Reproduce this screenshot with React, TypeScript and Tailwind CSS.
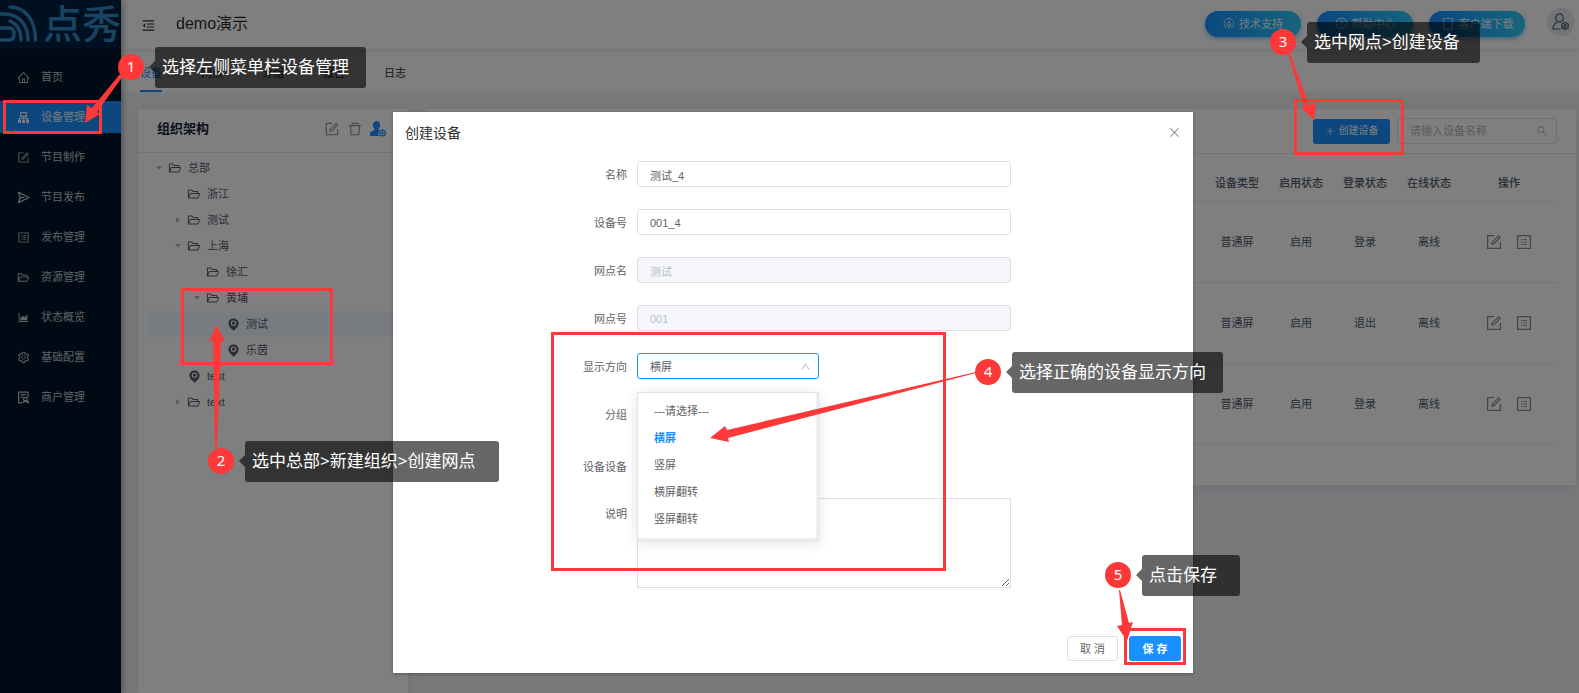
import type { ReactNode } from 'react';
import {
  AiOutlineAreaChart,
  AiOutlineClose,
  AiOutlineDelete,
  AiOutlineFolderOpen,
  AiOutlineForm,
  AiOutlineHome,
  AiOutlineMenuFold,
  AiOutlinePlus,
  AiOutlineProfile,
  AiOutlineQuestionCircle,
  AiOutlineSearch,
  AiOutlineSetting,
  AiOutlineTablet,
  AiOutlineUp,
} from 'react-icons/ai';

const DeviceIcon = () => (
  <svg viewBox="0 0 13 13" className="size-[13px]" fill="none" stroke="currentColor" strokeWidth="1.2">
    <path d="M3.600 1.600h5.800v3.800H3.600zM6.500 5.400v3M2.500 9V7.300h8V9" />
    <path d="M1 8.800h3V12H1zM5 8.800h3V12H5zM9 8.800h3V12H9z" fill="currentColor" stroke="none" />
  </svg>
);

const SendIcon = () => (
  <svg viewBox="0 0 14 14" className="size-[13px]" fill="none" stroke="currentColor" strokeWidth="1.4" strokeLinejoin="round">
    <path d="M1.5 1.5 13 7 1.5 12.5 3.5 7z" />
    <path d="M3.5 7H8" />
  </svg>
);

const MerchantIcon = () => (
  <svg viewBox="0 0 14 14" className="size-[13px]" fill="none" stroke="currentColor" strokeWidth="1.3">
    <path d="M5.5 12.8H1.8V1.2h10v6M4 4h5.6M4 6.6h3" />
    <circle cx="9" cy="8.8" r="1.9" />
    <path d="M6 13c.5-1.6 1.600-2.200 3-2.200l3.500 2.400M10.500 10l2.300 2.600" />
  </svg>
);

const UserPlusIcon = () => (
  <svg viewBox="0 0 16 16" className="size-4" fill="currentColor">
    <path d="M6.500 0C8.700 0 10.200 1.700 10.200 4c0 1.600-.7 3-1.600 3.800v1.300l1 .5A4 4 0 0 0 9.300 15H1C.4 15 0 14.600 0 14v-1.400C0 10.800 2.600 10 4.500 9.100V7.800C3.500 7 2.800 5.600 2.800 4 2.800 1.700 4.300 0 6.500 0z" />
    <circle cx="12.500" cy="12" r="2.900" fill="none" stroke="currentColor" strokeWidth="1.200" />
    <path d="M12 10.300h1v1.200h1.200v1H13v1.200h-1v-1.200h-1.200v-1H12z" />
  </svg>
);

const UserSettingIcon = () => (
  <svg viewBox="0 0 18 18" className="size-[18px]" fill="none" stroke="currentColor" strokeWidth="1.200">
    <ellipse cx="7.500" cy="5" rx="3.700" ry="4.200" />
    <path d="M5.200 9.200C2.500 10.200 1 12.300 1 16h7.500" />
    <path d="m13 9.300 3.200 1.800v3.700L13 16.600l-3.200-1.800v-3.700z" />
    <circle cx="13" cy="13" r="1.300" />
  </svg>
);

const SupportIcon = () => (
  <svg viewBox="0 0 12 13" className="size-3" fill="none" stroke="currentColor" strokeWidth="1">
    <path d="M3.500 11C.4 9 0 5 2 2.600 4-.1 8-.1 10 2.600c2 2.400 1.600 6.400-1.500 8.400" />
    <path d="M6 12V6.500M6 3.200 4 6.800v2.400M6 3.200l2 3.600v2.400" />
  </svg>
);

const PinIcon = () => (
  <svg viewBox="0 0 12 14" className="h-[13px] w-[11px]">
    <path d="M6 .5c3.100 0 5.500 2.300 5.500 5.300C11.500 9 8 12 6 13.700 4 12 .5 9 .5 5.800.5 2.800 2.900.5 6 .5z" fill="#515a6e" />
    <circle cx="6" cy="5.500" r="2.400" fill="none" stroke="#fff" strokeWidth="1.100" />
  </svg>
);

const MENU: { label: string; icon: ReactNode; active?: boolean }[] = [
  { label: '首页', icon: <AiOutlineHome /> },
  { label: '设备管理', icon: <DeviceIcon />, active: true },
  { label: '节目制作', icon: <AiOutlineForm /> },
  { label: '节目发布', icon: <SendIcon /> },
  { label: '发布管理', icon: <AiOutlineProfile /> },
  { label: '资源管理', icon: <AiOutlineFolderOpen /> },
  { label: '状态概览', icon: <AiOutlineAreaChart /> },
  { label: '基础配置', icon: <AiOutlineSetting /> },
  { label: '商户管理', icon: <MerchantIcon /> },
];

const TABS = ['设备', '网点', '分组', '报告', '日志'];

type Node = {
  label: string;
  level: number;
  kind: 'folder' | 'pin';
  caret?: 'open' | 'closed';
  selected?: boolean;
};

const TREE: Node[] = [
  { label: '总部', level: 0, kind: 'folder', caret: 'open' },
  { label: '浙江', level: 1, kind: 'folder' },
  { label: '测试', level: 1, kind: 'folder', caret: 'closed' },
  { label: '上海', level: 1, kind: 'folder', caret: 'open' },
  { label: '徐汇', level: 2, kind: 'folder' },
  { label: '黄埔', level: 2, kind: 'folder', caret: 'open' },
  { label: '测试', level: 3, kind: 'pin', selected: true },
  { label: '乐茵', level: 3, kind: 'pin' },
  { label: 'test', level: 1, kind: 'pin' },
  { label: 'text', level: 1, kind: 'folder', caret: 'closed' },
];

const INDENT = ['pl-1', 'pl-[23px]', 'pl-[42px]', 'pl-[62px]'];

const DEVICES = [
  { id: 1, type: '普通屏', enabled: '启用', login: '登录', online: '离线' },
  { id: 2, type: '普通屏', enabled: '启用', login: '退出', online: '离线' },
  { id: 3, type: '普通屏', enabled: '启用', login: '登录', online: '离线' },
];

const FIELDS = [
  { id: 'name', label: '名称', value: '测试_4' },
  { id: 'device-no', label: '设备号', value: '001_4' },
  { id: 'site-name', label: '网点名', value: '测试', disabled: true },
  { id: 'site-no', label: '网点号', value: '001', disabled: true },
];

const DIRECTIONS = ['---请选择---', '横屏', '竖屏', '横屏翻转', '竖屏翻转'];

// Tutorial overlay: numbered badges, callouts, highlight frames and arrows
const STEPS = [
  { text: '选择左侧菜单栏设备管理', badge: 'left-[118px] top-[54px]', tip: 'left-[155px] top-[47px] w-[211px]' },
  { text: '选中总部>新建组织>创建网点', badge: 'left-[208px] top-[448px]', tip: 'left-[245px] top-[441px] w-[254px]' },
  { text: '选中网点>创建设备', badge: 'left-[1270px] top-[29px]', tip: 'left-[1307px] top-[22px] w-[173px]' },
  { text: '选择正确的设备显示方向', badge: 'left-[975px] top-[359px]', tip: 'left-[1012px] top-[352px] w-[211px]' },
  { text: '点击保存', badge: 'left-[1105px] top-[562px]', tip: 'left-[1142px] top-[555px] w-[98px]' },
];

const FRAMES = [
  'left-[3px] top-[100px] w-[99px] h-[34px]',
  'left-[181px] top-[288px] w-[152px] h-[77px]',
  'left-[1294px] top-[99px] w-[110px] h-[56px]',
  'left-[551px] top-[332px] w-[395px] h-[239px]',
  'left-[1124px] top-[628px] w-[62px] h-[37px]',
];

const ARROWS = [
  '120,74 92,108 87,105 85,123 100,114 97,112 123,76',
  '215,448 213,341 209,341 217,325 225,342 221,341 217,448',
  '1288,53 1304,107 1301,108 1314,120 1316,103 1309,105 1290,53',
  '976,372 727,430 725,426 710,438 729,442 728,438 976,373',
  '1119,590 1122,625 1117,626 1127,641 1133,622 1129,623 1120,590',
];

function Sidebar() {
  return (
    <aside className="relative z-10 w-[121px] shrink-0 bg-[#001529] shadow-[2px_0_6px_rgba(0,21,41,0.35)]">
      <div className="flex h-[49px] items-center overflow-hidden bg-[#002140] text-[#3ea2e4]">
        <svg viewBox="0 0 43 49" className="h-[49px] w-[43px] shrink-0 opacity-80" fill="none" stroke="currentColor" strokeWidth="3.500" strokeLinecap="round">
          <path d="M10 7C25 7 35.500 20 35.500 40" />
          <path d="M0 14h5c14 0 23 11 23 26" />
          <path d="M10 21c7 3 11 10 11 19" />
          <path d="M0 28h9c3 0 5 2 5 6s-2 6-5 6H0" />
        </svg>
        <span className="flex shrink-0 text-[39px] leading-[49px] font-medium opacity-80">
          <span>点</span>
          <span>秀</span>
        </span>
      </div>
      <nav className="flex flex-col gap-2 pt-3">
        {MENU.map((item) => (
          <a
            key={item.label}
            href="#"
            className={`flex h-8 items-center gap-[11px] pl-[17px] ${
              item.active ? 'bg-[#1890ff] text-white/90' : 'text-white/75'
            }`}
          >
            <span className="text-[13px]">{item.icon}</span>
            {item.label}
          </a>
        ))}
      </nav>
    </aside>
  );
}

function Header() {
  return (
    <header className="relative flex h-[50px] shrink-0 items-center border-b border-[#e8eaec] bg-white pr-1 pb-0.5 pl-5 shadow-[0_1px_4px_rgba(0,21,41,0.08)]">
      <button type="button" aria-label="收起菜单" className="mt-1 text-[15px] text-[#303133]">
        <AiOutlineMenuFold />
      </button>
      <h1 className="ml-5 text-base text-black/85">demo演示</h1>
      <div className="ml-auto flex items-center gap-4 text-white/90">
        {[
          { label: '技术支持', icon: <SupportIcon /> },
          { label: '帮助中心', icon: <AiOutlineQuestionCircle className="text-[13px]" /> },
          { label: '客户端下载', icon: <AiOutlineTablet className="text-[14px]" /> },
        ].map((b) => (
          <button
            key={b.label}
            type="button"
            className="flex h-[26px] w-24 items-center justify-center gap-1 rounded-full bg-linear-to-r from-[#1890ff] to-[#30c8f8] whitespace-nowrap shadow-[0_2px_4px_rgba(24,144,255,0.5)]"
          >
            {b.icon}
            {b.label}
          </button>
        ))}
        <button type="button" aria-label="账户" className="ml-1.5 mb-1 flex size-7 items-center justify-center rounded-full bg-[#e6e8ee] text-[#515a6e]">
          <UserSettingIcon />
        </button>
      </div>
    </header>
  );
}

function OrgTree() {
  return (
    <section className="w-[270px] shrink-0 bg-white shadow-[0_2px_12px_rgba(120,150,200,0.2)]">
      <div className="flex h-11 items-center border-b border-[#dfe6ee] pr-[22px] pb-1 pl-[19px]">
        <h2 className="text-[13px] font-bold text-[#17233d]">组织架构</h2>
        <div className="ml-auto flex items-center gap-[7px] text-base text-[#909090]">
          <button type="button" aria-label="编辑"><AiOutlineForm /></button>
          <button type="button" aria-label="删除"><AiOutlineDelete /></button>
          <button type="button" aria-label="添加" className="text-[#1890ff]"><UserPlusIcon /></button>
        </div>
      </div>
      <ul className="pt-0.5 pl-[11px] text-[#515a6e]">
        {TREE.map((node, i) => (
          <li
            key={i}
            className={`flex h-[26px] items-center ${INDENT[node.level]} ${node.selected ? 'bg-[#f0f7ff]' : ''}`}
          >
            <span className="flex w-[15px] shrink-0 pl-[3px]">
              {node.caret === 'open' && (
                <svg viewBox="0 0 6 4" className="h-1 w-1.5 fill-[#b0b7c4]"><path d="M0 0h6L3 4z" /></svg>
              )}
              {node.caret === 'closed' && (
                <svg viewBox="0 0 4 6" className="ml-px h-1.5 w-1 fill-[#b0b7c4]"><path d="M0 0l4 3-4 3z" /></svg>
              )}
            </span>
            <span className="mr-1.5 flex w-[14px] justify-center text-[14px]">
              {node.kind === 'folder' ? <AiOutlineFolderOpen /> : <PinIcon />}
            </span>
            {node.label}
          </li>
        ))}
      </ul>
    </section>
  );
}

function DevicePanel() {
  return (
    <section className="min-w-0 flex-1 self-start bg-white pb-10 shadow-[0_2px_12px_rgba(120,150,200,0.2)]">
      <div className="flex h-[45px] items-center justify-end gap-[7px] border-b border-[#e4e7ed] pr-[19px]">
        <button type="button" className="flex h-[25px] w-[77px] items-center justify-center gap-1 rounded-[3px] bg-[#1890ff] text-[10px] text-white">
          <AiOutlinePlus className="text-[10px]" />
          创建设备
        </button>
        <label className="flex h-[26px] w-40 items-center rounded-[3px] border border-[#dcdfe6] pr-2 pl-3">
          <input
            type="text"
            aria-label="设备名称"
            placeholder="请输入设备名称"
            className="min-w-0 flex-1 bg-transparent placeholder:text-[#b0b5c0]"
          />
          <AiOutlineSearch className="text-[12px] text-[#b0b5c0]" />
        </label>
      </div>
      <div className="pt-3 pr-[19px] pl-5">
        <table className="w-full table-fixed text-center text-[#515a6e]">
          <thead>
            <tr className="h-[35px] border-b border-[#e8eaec]">
              <td />
              <th className="w-16 font-medium">设备类型</th>
              <th className="w-16 font-medium">启用状态</th>
              <th className="w-16 font-medium">登录状态</th>
              <th className="w-16 font-medium">在线状态</th>
              <th className="w-24 font-medium">操作</th>
            </tr>
          </thead>
          <tbody>
            {DEVICES.map((d) => (
              <tr key={d.id} className="h-[81px] border-b border-[#e8eaec]">
                <td />
                <td>{d.type}</td>
                <td>{d.enabled}</td>
                <td>{d.login}</td>
                <td>{d.online}</td>
                <td>
                  <div className="flex justify-center gap-3 text-[18px] text-[#8a8a8a]">
                    <button type="button" aria-label="编辑"><AiOutlineForm /></button>
                    <button type="button" aria-label="详情"><AiOutlineProfile /></button>
                  </div>
                </td>
              </tr>
            ))}
          </tbody>
        </table>
      </div>
    </section>
  );
}

function CreateDialog() {
  return (
    <div className="absolute inset-0 z-20 flex items-start justify-center bg-black/50 pt-28 pl-[7px]">
      <div role="dialog" aria-label="创建设备" className="w-[800px] bg-white shadow-[0_1px_3px_rgba(0,0,0,0.3)]">
        <div className="flex h-[49px] items-center justify-between px-3 pb-2">
          <h2 className="text-[14px] text-[#303133]">创建设备</h2>
          <button type="button" aria-label="关闭" className="text-[13px] text-[#909399]">
            <AiOutlineClose />
          </button>
        </div>
        <form className="flex flex-col gap-[22px] text-[#606266]">
          {FIELDS.map((f) => (
            <div key={f.id} className="flex h-[26px] items-center">
              <label htmlFor={f.id} className="w-[244px] pt-0.5 pr-[10px] text-right">{f.label}</label>
              <input
                id={f.id}
                type="text"
                defaultValue={f.value}
                disabled={f.disabled}
                className="h-[26px] w-[374px] rounded-[3px] border border-[#dcdfe6] px-3 pt-0.5 disabled:bg-[#f5f7fa] disabled:text-[#b8bfcc]"
              />
            </div>
          ))}
          <div className="flex h-[26px] items-center">
            <label htmlFor="direction" className="w-[244px] pt-0.5 pr-[10px] text-right">显示方向</label>
            <div className="relative w-[182px]">
              <select
                id="direction"
                defaultValue="横屏"
                className="block h-[26px] w-full appearance-none rounded-[3px] border border-[#1890ff] bg-white px-3 pt-0.5"
              >
                {DIRECTIONS.map((d) => (
                  <option key={d}>{d}</option>
                ))}
              </select>
              <AiOutlineUp className="absolute top-2 right-2 text-[11px] text-[#b0b5c0]" />
              <ul className="absolute top-[39px] left-0 z-10 w-full border border-[#e0e4ec] bg-white pt-[5px] pb-[7px] shadow-[inset_-2px_-2px_0_#eef0f4,0_2px_12px_rgba(0,0,0,0.12)]">
                {DIRECTIONS.map((d) => (
                  <li key={d} className={`h-[27px] px-4 leading-[27px] ${d === '横屏' ? 'font-bold text-[#1890ff]' : ''}`}>
                    {d}
                  </li>
                ))}
              </ul>
            </div>
          </div>
          <div className="flex h-[26px] items-center">
            <span className="w-[244px] pt-0.5 pr-[10px] text-right">分组</span>
          </div>
          <div className="flex h-[27px] items-start">
            <span className="w-[244px] pt-0.5 pr-[10px] text-right leading-8">设备设备</span>
          </div>
          <div className="flex items-start">
            <label htmlFor="remark" className="w-[244px] pr-[10px] text-right leading-8">说明</label>
            <textarea id="remark" className="h-[90px] w-[374px] resize-y border border-[#dcdfe6] px-3 py-1" />
          </div>
        </form>
        <div className="flex justify-end gap-[11px] px-3 pt-12 pb-3">
          <button type="button" className="h-[25px] w-[51px] rounded-[3px] border border-[#dcdfe6] text-[#606266]">
            取 消
          </button>
          <button type="submit" className="h-[25px] w-[52px] rounded-[3px] bg-[#1890ff] font-bold text-white">
            保 存
          </button>
        </div>
      </div>
    </div>
  );
}

function Guide() {
  return (
    <div className="pointer-events-none absolute inset-0 z-30 font-['Noto_Sans','Noto_Sans_CJK_SC',sans-serif]">
      {FRAMES.map((frame) => (
        <div key={frame} className={`absolute border-3 border-[#fd3838] ${frame}`} />
      ))}
      {STEPS.map((step, i) => (
        <div key={step.text}>
          <div className={`absolute flex h-[41px] items-center rounded-[3px] bg-black/60 pb-0.5 pl-[7px] text-[17px] whitespace-nowrap text-white ${step.tip}`}>
            <svg viewBox="0 0 6 12" className="absolute top-[14px] right-full h-3 w-1.5 fill-black/60">
              <path d="M6 0v12L0 6z" />
            </svg>
            {step.text}
          </div>
          <div className={`absolute flex size-[26px] items-center justify-center rounded-full bg-[#fd3838] pb-0.5 text-[15px] leading-none text-white ${step.badge}`}>
            {i + 1}
          </div>
        </div>
      ))}
      <svg className="absolute inset-0 size-full fill-[#fd3838]">
        {ARROWS.map((points) => (
          <polygon key={points} points={points} />
        ))}
      </svg>
    </div>
  );
}

export default function App() {
  return (
    <div className="relative flex h-screen overflow-hidden bg-[#f0f2f5] font-['Liberation_Sans','Noto_Sans_CJK_SC',sans-serif] text-[11px] leading-4">
      <Sidebar />
      <div className="flex min-w-0 flex-1 flex-col">
        <Header />
        <div className="flex h-[42px] shrink-0 items-end gap-[39px] bg-white pl-[19px] text-[#303133]">
          {TABS.map((tab, i) => (
            <a
              key={tab}
              href="#"
              className={`h-[27px] border-b-2 ${i === 0 ? 'border-[#1890ff] text-[#1890ff]' : 'border-transparent'}`}
            >
              {tab}
            </a>
          ))}
        </div>
        <main className="flex min-h-0 flex-1 gap-[18px] pt-[17px] pr-[3px] pl-[17px]">
          <OrgTree />
          <DevicePanel />
        </main>
      </div>
      <CreateDialog />
      <Guide />
    </div>
  );
}
